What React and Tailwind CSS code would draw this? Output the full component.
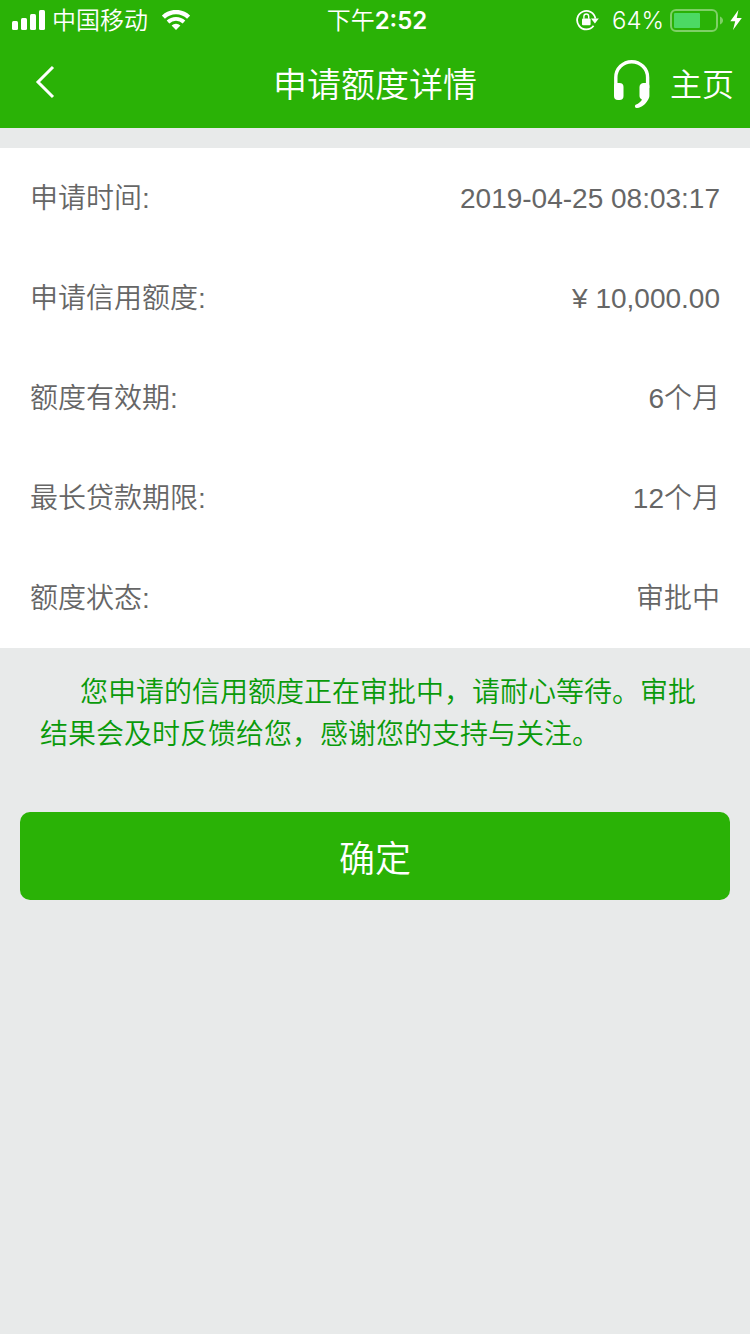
import React from 'react';

const details = [
    { label: '申请时间:', value: '2019-04-25 08:03:17' },
    { label: '申请信用额度:', value: '¥ 10,000.00' },
    { label: '额度有效期:', value: '6个月' },
    { label: '最长贷款期限:', value: '12个月' },
    { label: '额度状态:', value: '审批中' },
];

const SignalIcon = () => (
    <svg width="34" height="20" viewBox="0 0 34 20" fill="currentColor">
        <rect x="0" y="11" width="6" height="9" rx="1.5" />
        <rect x="9" y="8" width="6" height="12" rx="1.5" />
        <rect x="18" y="4" width="6" height="16" rx="1.5" />
        <rect x="27" y="0" width="6" height="20" rx="1.5" />
    </svg>
);

const WifiIcon = () => (
    <svg width="28" height="20" viewBox="0 0 28 20" fill="none" stroke="currentColor">
        <path d="M1.4 7.2a18 18 0 0 1 25.2 0" strokeWidth="4.4" />
        <path d="M6 12a11.6 11.6 0 0 1 16 0" strokeWidth="3.8" />
        <path d="M14 20l-4.4-4.4a6.4 6.4 0 0 1 8.8 0z" fill="currentColor" stroke="none" />
    </svg>
);

const RotationLockIcon = () => (
    <svg width="24" height="22" viewBox="0 0 24 22" fill="none" stroke="currentColor">
        <path d="M17.6 16.8A9.2 9.2 0 1 1 19.4 9.6" strokeWidth="1.8" />
        <path d="M15 9.6h7.8l-3.9 4.8z" fill="currentColor" stroke="none" />
        <rect x="6" y="9.4" width="8.6" height="6.8" rx="1" fill="currentColor" stroke="none" />
        <path d="M7.9 9.8V7.6a2.4 2.6 0 0 1 4.8 0v2.2" strokeWidth="1.4" />
    </svg>
);

const BatteryIcon = () => (
    <svg width="54" height="24" viewBox="0 0 54 24" fill="none">
        <rect x="1" y="2" width="46" height="21" rx="5" stroke="#7fd067" strokeWidth="2" />
        <rect x="4" y="5" width="26" height="15" rx="1" fill="#4cd964" />
        <path d="M50 8.5c2 .8 3 2.3 3 4s-1 3.2-3 4z" fill="#7fd067" />
    </svg>
);

const BoltIcon = () => (
    <svg width="12" height="20" viewBox="0 0 12 20" fill="currentColor">
        <path d="M8.4 0L0.3 11.2h4.9L3 20 11.8 8H6.8z" />
    </svg>
);

const HeadsetIcon = () => (
    <svg width="36" height="48" viewBox="0 0 36 48" fill="none" stroke="currentColor">
        <path d="M1.8 28V17.5a15.9 15.8 0 0 1 31.8 0V28" strokeWidth="3.4" />
        <path d="M0 26a3 3 0 0 1 3-3h2.500a4 4 0 0 1 4 4v9a4 4 0 0 1-4 4H4a4 4 0 0 1-4-4z" fill="currentColor" stroke="none" />
        <path d="M35.4 26a3 3 0 0 0-3-3H30a4 4 0 0 0-4.5 4v9a4 4 0 0 0 2.500 3.800c-1.400 2-3.400 4-5.800 4.600-2 .8-1.600 3.800.8 3.600 5.200-.8 8.600-4.200 10.600-7.600 1.200-1.600 1.800-3 1.800-4.600z" fill="currentColor" stroke="none" />
    </svg>
);

const StatusBar = () => (
    <div className="grid h-10 grid-cols-3 items-center pl-3 pr-2 font-['Inter','Noto_Sans_CJK_SC',sans-serif] text-2xl">
        <div className="flex items-center gap-1.5">
            <SignalIcon />
            <span className="pt-0.5">中国移动</span>
            <span className="ml-2"><WifiIcon /></span>
        </div>
        <div className="pt-0.5 text-center">
            <span>下午</span>
            <span className="font-semibold">2:52</span>
        </div>
        <div className="flex items-center justify-end gap-1.5">
            <span className="mr-1.5"><RotationLockIcon /></span>
            <span className="pt-0.5 font-light">64%</span>
            <BatteryIcon />
            <BoltIcon />
        </div>
    </div>
);

const NavBar = () => (
    <div className="grid h-22 grid-cols-[1fr_auto_1fr] items-center px-4">
        <button type="button" aria-label="返回" className="ml-4 w-fit pb-1">
            <svg width="24" height="34" viewBox="0 0 24 34" fill="none" stroke="currentColor" strokeWidth="3">
                <path d="M21 2L6 17l15 15" />
            </svg>
        </button>
        <h1 className="pt-0.5 text-[34px] font-[350]">申请额度详情</h1>
        <div className="flex items-center justify-end gap-5">
            <button type="button" aria-label="客服">
                <HeadsetIcon />
            </button>
            <a href="#home" className="pt-0.5 text-[32px]">主页</a>
        </div>
    </div>
);

const App = () => {
    return (
        <div className="min-h-screen bg-[#e8eaea] font-['Liberation_Sans','Noto_Sans_CJK_SC',sans-serif] font-[350]">
            <header className="bg-[#2ab206] text-white">
                <StatusBar />
                <NavBar />
            </header>

            <main>
                <dl className="mt-5 bg-white text-[28px] text-[#666]">
                    {details.map((item) => (
                        <div key={item.label} className="flex h-25 items-center justify-between px-[30px] pt-0.5">
                            <dt>{item.label}</dt>
                            <dd>{item.value}</dd>
                        </div>
                    ))}
                </dl>

                <p className="px-10 pt-6 indent-10 text-[28px] leading-[42px] text-[#0a9a0a]">
                    您申请的信用额度正在审批中，请耐心等待。审批结果会及时反馈给您，感谢您的支持与关注。
                </p>

                <div className="px-5 pt-14">
                    <button type="button" className="h-22 w-full rounded-[10px] bg-[#2ab206] pt-2 text-4xl text-white">
                        确定
                    </button>
                </div>
            </main>
        </div>
    );
};

export default App;
